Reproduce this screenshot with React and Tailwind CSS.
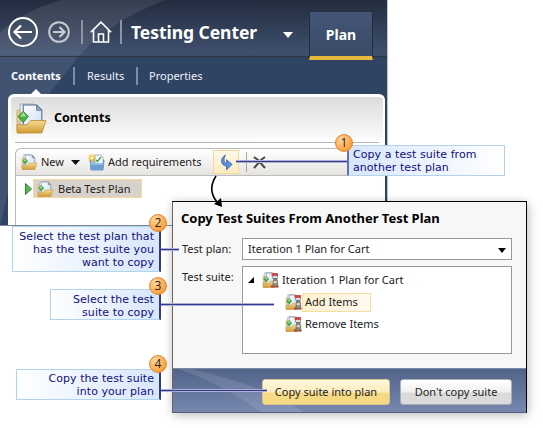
import React from "react";

function FolderIcon({ className, suite }) {
  return (
    <svg viewBox="0 0 30 30" className={className}>
      <defs>
        <linearGradient id="fold" x1="0" y1="0" x2="0" y2="1">
          <stop offset="0" stopColor="#f3dc94" />
          <stop offset="1" stopColor="#d39a35" />
        </linearGradient>
        <linearGradient id="page" x1="0" y1="0" x2="1" y2="1">
          <stop offset="0" stopColor="#ffffff" />
          <stop offset="1" stopColor="#c9dcf2" />
        </linearGradient>
      </defs>
      <path d="M1 7h7l1 3v19H2L1 26z" fill="#ecd08a" stroke="#c9a55a" strokeWidth=".8" />
      <path d="M4 1h13l4 4v17H4z" fill="#e9f1fa" stroke="#8a9db5" strokeWidth=".8" />
      <path d="M7 2h13l5 5v18H7z" fill="url(#page)" stroke="#586b84" strokeWidth="1" />
      <path d="M20 2v5h5z" fill="#9ab4d4" stroke="#586b84" strokeWidth=".8" />
      <path d="M1 29V21h10l3-4h15l-4 12z" fill="url(#fold)" stroke="#ba8a31" strokeWidth=".8" />
      <path d="M7 8l5 5-5 6-5-6z" fill="#4fae4c" stroke="#2e8134" strokeWidth=".8" />
      <path d="M7 9l3 4H4z" fill="#a3dc94" />
      {suite && (
        <g>
          <path d="M17 2h12v6H17z" fill="#d3423d" />
          <path d="M19 7h9v5h-9z" fill="#f5f5f5" stroke="#555" />
          <path d="M21 12h6l2 16H19z" fill="#8b8683" stroke="#4b4644" />
          <path d="M21 17h6v4h-6z" fill="#d8d5d2" />
          <path d="M16 26h5v3h-5zM26 26h4v3h-4z" fill="#b43a32" />
        </g>
      )}
    </svg>
  );
}

function RequirementsIcon() {
  return (
    <svg viewBox="0 0 17 17" className="h-[17px] w-[17px]">
      <path d="M2 5h6l1-2h5v3h2l-1 10H3z" fill="#8bb6df" stroke="#5580ac" strokeWidth=".8" />
      <path d="M7 1h6l2 2v7H7z" fill="#f2f8fd" stroke="#839bb3" strokeWidth=".7" />
      <path d="M2 9h14l-2 7H3z" fill="#6f9fce" />
      <path d="M3 10h12" stroke="#b9d6ef" />
      <path d="M8 6l1.500 1.500L13 3" fill="none" stroke="#3e9c49" strokeWidth="1.300" />
      <path d="M4 0v8M0 4h8M1 1l6 6M7 1L1 7" stroke="#f2c22f" strokeWidth="1.1" />
      <circle cx="4" cy="4" r="1.4" fill="#fff6bd" />
    </svg>
  );
}

function Badge({ n }) {
  return (
    <span className="absolute -top-[13px] flex h-[18px] w-[18px] items-center justify-center rounded-full border border-[#d98a3a] bg-radial-[at_35%_30%] from-[#ffd9a0] via-[#ffb056] to-[#f68a1c] font-['Open_Sans',sans-serif] text-[12px] leading-none text-[#222]">
      {n}
    </span>
  );
}

const lead = "absolute h-[3px] border-y border-white/60 bg-[#333a92]";

function Header() {
  return (
    <header className="flex h-[57px] border-b border-[#30343c]">
      <div className="flex items-center pt-[8px] pl-[8px]">
        <svg viewBox="0 0 30 30" className="h-[30px] w-[30px] fill-none stroke-white">
          <circle cx="15" cy="15" r="14" strokeWidth="2" />
          <path d="M24 15H7M13 8.5L6.5 15l6.500 6.500" strokeWidth="2.200" />
        </svg>
        <svg viewBox="0 0 22 22" className="ml-[10px] h-[22px] w-[22px] fill-none stroke-[#c6cad1]">
          <circle cx="11" cy="11" r="9.800" strokeWidth="2" />
          <path d="M5 11h11M11.500 6l5 5-5 5" strokeWidth="2.200" />
        </svg>
        <i className="ml-[11px] h-[24px] w-[2px] bg-[#8b94a2]" />
        <svg viewBox="0 0 22 22" className="ml-[7px] h-[22px] w-[22px] fill-none stroke-white">
          <path d="M.8 11.200L11 1.200l10.200 10M3.500 9v12h15V9M8.500 21v-8h5v8" strokeWidth="1.600" />
        </svg>
        <i className="ml-[8px] h-[24px] w-[2px] bg-[#8b94a2]" />
        <span className="ml-[9px] w-[152px] text-[17.500px] leading-6 font-bold tracking-[-0.050px] whitespace-nowrap text-white">Testing Center</span>
        <svg viewBox="0 0 10 6" className="mt-[5px] h-[6px] w-[10px]"><path d="M0 0h10L5 6z" fill="#fff" /></svg>
      </div>
      <div className="relative z-10 mt-[11px] ml-auto mr-[14px] flex h-[49px] w-[64px] justify-center border-x border-t border-b-[4px] border-x-[#252b38] border-t-[#252b38] border-b-[#e8b93d] bg-linear-to-b from-[#435576] to-[#3b4b67] pt-[13px] text-[14px] leading-5 font-bold text-white">
        Plan
      </div>
    </header>
  );
}

function TestingCenter() {
  return (
    <div className="relative h-[226px] w-[388px] overflow-hidden border-r border-[#bfc2d2] border-b border-b-[#7d8798] bg-linear-to-b from-[#232d40] from-0% via-[#40516f] via-[24.500%] to-[#2f4362] to-[25%]">
      <svg viewBox="0 0 388 226" className="absolute inset-0 h-[226px] w-[388px]">
        <path d="M60 0H165Q105 24 78 57L48 95 20 140 0 226V32Q22 12 60 0z" fill="#fff" opacity=".09" />
      </svg>
      <div className="relative">
        <Header />
        <nav className="flex h-[37px] items-center pl-[11px] text-[11px] leading-4 text-[#eef1f6]">
          <b className="w-[51px] text-white">Contents</b>
          <i className="ml-[11px] h-[18px] w-[2px] bg-[#7590ae]" />
          <span className="ml-[12px] w-[37px]">Results</span>
          <i className="ml-[12px] h-[18px] w-[2px] bg-[#7590ae]" />
          <span className="ml-[11px]">Properties</span>
          <svg viewBox="0 0 12 6" className="absolute top-[89px] left-[30px] h-[6px] w-[12px]"><path d="M6 0l6 6H0z" fill="#fff" /></svg>
        </nav>
        <section className="ml-[8px] h-[132px] w-[377px] rounded-t-[6px] border-t-[3px] border-r-2 border-l-[3px] border-white bg-white">
          <div className="flex h-[45px] items-center rounded-t-[3px] bg-linear-to-b from-[#dcdcdc] to-[#fdfdfd] pl-[5px]">
            <FolderIcon className="-mt-[3px] h-[31px] w-[31px]" />
            <b className="-mt-[4px] ml-[7px] text-[12.500px] leading-5 text-black">Contents</b>
          </div>
          <div className="ml-[4px] w-[364px] border-t border-[#b8b8b8]" />
          <div className="mt-[5px] ml-[4px] h-[90px] rounded-tl-[6px] border-t border-l border-[#b9b9b9]">
            <div className="flex h-[27px] items-center rounded-tl-[6px] border-b border-[#bdbdbd] bg-linear-to-b from-white via-[#f3f2f0] to-[#e6e4e1] pl-[5px] text-[11px] leading-4 text-[#222]">
              <FolderIcon className="h-[16px] w-[17px]" />
              <span className="ml-[3px] w-[23px]">New</span>
              <svg viewBox="0 0 9 5" className="ml-[7px] h-[5px] w-[9px]"><path d="M0 0h9L4.500 5z" fill="#111" /></svg>
              <span className="ml-[8px]"><RequirementsIcon /></span>
              <span className="ml-[3px] w-[94px] whitespace-nowrap">Add requirements</span>
              <span className="ml-[11px] flex h-[24px] w-[26px] shrink-0 items-center justify-center border border-[#f4d999] bg-linear-to-b from-[#fff9e8] to-[#fcebc0]">
                <svg viewBox="0 0 14 18" className="h-[17px] w-[13px]">
                  <path d="M6 1C0 4 0 12 7 13v4l6-6-6-5v4C4 9 3.500 5 6 1z" fill="#5b8ee0" stroke="#315fae" strokeWidth=".8" />
                </svg>
              </span>
              <i className="ml-[7px] h-[20px] w-px bg-[#aaa59d]" />
              <svg viewBox="0 0 13 13" className="ml-[6px] h-[13px] w-[13px]">
                <path d="M1 1l4 3 7 8M12 1L8 4 1 12" fill="none" stroke="#494949" strokeWidth="2" />
              </svg>
            </div>
            <div className="mt-[3px] flex items-center pl-[9px]">
              <svg viewBox="0 0 7 12" className="h-[12px] w-[7px]"><path d="M.5.5v11L6.500 6z" fill="#5ab956" stroke="#318338" /></svg>
              <div className="ml-[1px] flex h-[19px] w-[109px] items-center border border-[#f4d99b] bg-[#d7d2cc] pl-[3px] text-[11px] leading-4 text-[#1d1d1d]">
                <FolderIcon className="h-[16px] w-[17px]" />
                <span className="ml-[4px] whitespace-nowrap">Beta Test Plan</span>
              </div>
            </div>
          </div>
        </section>
      </div>
    </div>
  );
}

function Dialog() {
  return (
    <div className="absolute top-[201px] left-[172px] flex h-[212px] w-[355px] flex-col border border-black border-b-[#555f73] border-l-[#666] bg-[#f7f7f7] text-[11px] leading-4 text-[#222] shadow-[1px_2px_10px_rgba(0,0,0,0.28)]">
      <h2 className="mt-[7px] ml-[8px] text-[13px] leading-[18px] font-bold tracking-[-0.020px] whitespace-nowrap text-black">Copy Test Suites From Another Test Plan</h2>
      <div className="mt-[11px] ml-[9px] flex">
        <span className="w-[60px] pt-[3px]">Test plan:</span>
        <div className="flex h-[22px] w-[270px] items-center justify-between border border-[#999] bg-white pr-[5px] pl-[5px]">
          <span>Iteration 1 Plan for Cart</span>
          <svg viewBox="0 0 8 5" className="mt-[2px] h-[5px] w-[8px]"><path d="M0 0h8L4 5z" fill="#000" /></svg>
        </div>
      </div>
      <div className="mt-[6px] ml-[9px] flex">
        <span className="w-[60px] pt-[3px] whitespace-nowrap">Test suite:</span>
        <div className="h-[88px] w-[270px] border border-[#999] bg-white pt-[2px]">
          <div className="flex h-[22px] items-center pl-[5px]">
            <svg viewBox="0 0 7 7" className="h-[6px] w-[6px]"><path d="M7 0v7H0z" fill="#000" /></svg>
            <FolderIcon suite className="ml-[8px] h-[16px] w-[17px]" />
            <span className="ml-[3px]">Iteration 1 Plan for Cart</span>
          </div>
          <div className="flex h-[22px] items-center pl-[42px]">
            <FolderIcon suite className="h-[16px] w-[17px]" />
            <span className="flex h-[19px] w-[69px] items-center border border-[#f7dda0] bg-linear-to-r from-[#fff1cf] to-[#fffaf0] pl-[2px]">Add Items</span>
          </div>
          <div className="flex h-[21px] items-center pl-[42px]">
            <FolderIcon suite className="h-[16px] w-[17px]" />
            <span className="ml-[3px]">Remove Items</span>
          </div>
        </div>
      </div>
      <footer className="relative mt-auto flex h-[44px] justify-end gap-[10px] overflow-hidden border-t border-[#7b8ba5] bg-linear-to-b from-[#52638a] to-[#7788b0] pt-[10px] pr-[14px]">
        <svg viewBox="0 0 354 43" className="absolute top-0 left-0 h-[43px] w-[354px]"><path d="M5 0h15Q100 20 130 43H88Q50 15 5 0z" fill="#fff" opacity=".1" /></svg>
        <button className="relative h-[26px] w-[128px] rounded-[3px] border border-[#d9c48e] bg-linear-to-b from-[#fff7df] from-0% via-[#fdedbd] via-50% to-[#f5da83] to-[55%] leading-4 whitespace-nowrap">Copy suite into plan</button>
        <button className="relative h-[26px] w-[112px] rounded-[3px] border border-[#a8acb4] bg-linear-to-b from-white from-0% via-[#f0f0f0] via-50% to-[#dadada] to-[55%] leading-4 whitespace-nowrap">Don't copy suite</button>
      </footer>
    </div>
  );
}

const note = "absolute border border-[#b2d3ea] font-['DejaVu_Sans',sans-serif] text-[11px] leading-[13px] tracking-[0.060px] text-[#10107a] whitespace-nowrap";
const rightNote = "border-r-2 border-r-[#333a92] bg-linear-to-r from-white to-[#d7e6fc] pr-[5px] text-right";

export default function App() {
  return (
    <main className="relative h-[428px] w-[543px] overflow-hidden bg-white font-['Noto_Sans','Open_Sans',sans-serif]">
      <TestingCenter />
      <Dialog />
      <svg viewBox="0 0 20 36" className="absolute top-[174px] left-[207px] h-[36px] w-[20px]">
        <path d="M9 2Q0 16 10 28" fill="none" stroke="#000" strokeWidth="1.600" />
        <path d="M7 30l7-6 1 9z" fill="#000" />
      </svg>
      <i className={`${lead} top-[160px] left-[236px] w-[112px]`} />
      <i className={`${lead} top-[248px] left-[160px] w-[19px]`} />
      <i className={`${lead} top-[303px] left-[160px] w-[114px]`} />
      <i className={`${lead} top-[389px] left-[160px] w-[107px]`} />
      <div className={`${note} top-[145px] left-[347px] h-[31px] w-[158px] border-l-2 border-l-[#6672b0] bg-linear-to-r from-[#d7e6fc] to-white pt-[2px] pl-[4px]`}>
        <div className="absolute top-[1px] -left-[14px]"><Badge n="1" /></div>
        Copy a test suite from<br />another test plan
      </div>
      <div className={`${note} ${rightNote} top-[226px] left-[12px] h-[46px] w-[149px] pt-[3px]`}>
        <div className="absolute top-0 right-[10px]"><Badge n="2" /></div>
        Select the test plan that<br />has the test suite you<br />want to copy
      </div>
      <div className={`${note} ${rightNote} top-[289px] left-[50px] h-[31px] w-[111px] pt-[3px]`}>
        <div className="absolute top-0 right-[10px]"><Badge n="3" /></div>
        Select the test<br />suite to copy
      </div>
      <div className={`${note} ${rightNote} top-[369px] left-[16px] h-[31px] w-[145px] pt-[2px]`}>
        <div className="absolute -top-[2px] right-[10px]"><Badge n="4" /></div>
        Copy the test suite<br />into your plan
      </div>
    </main>
  );
}
